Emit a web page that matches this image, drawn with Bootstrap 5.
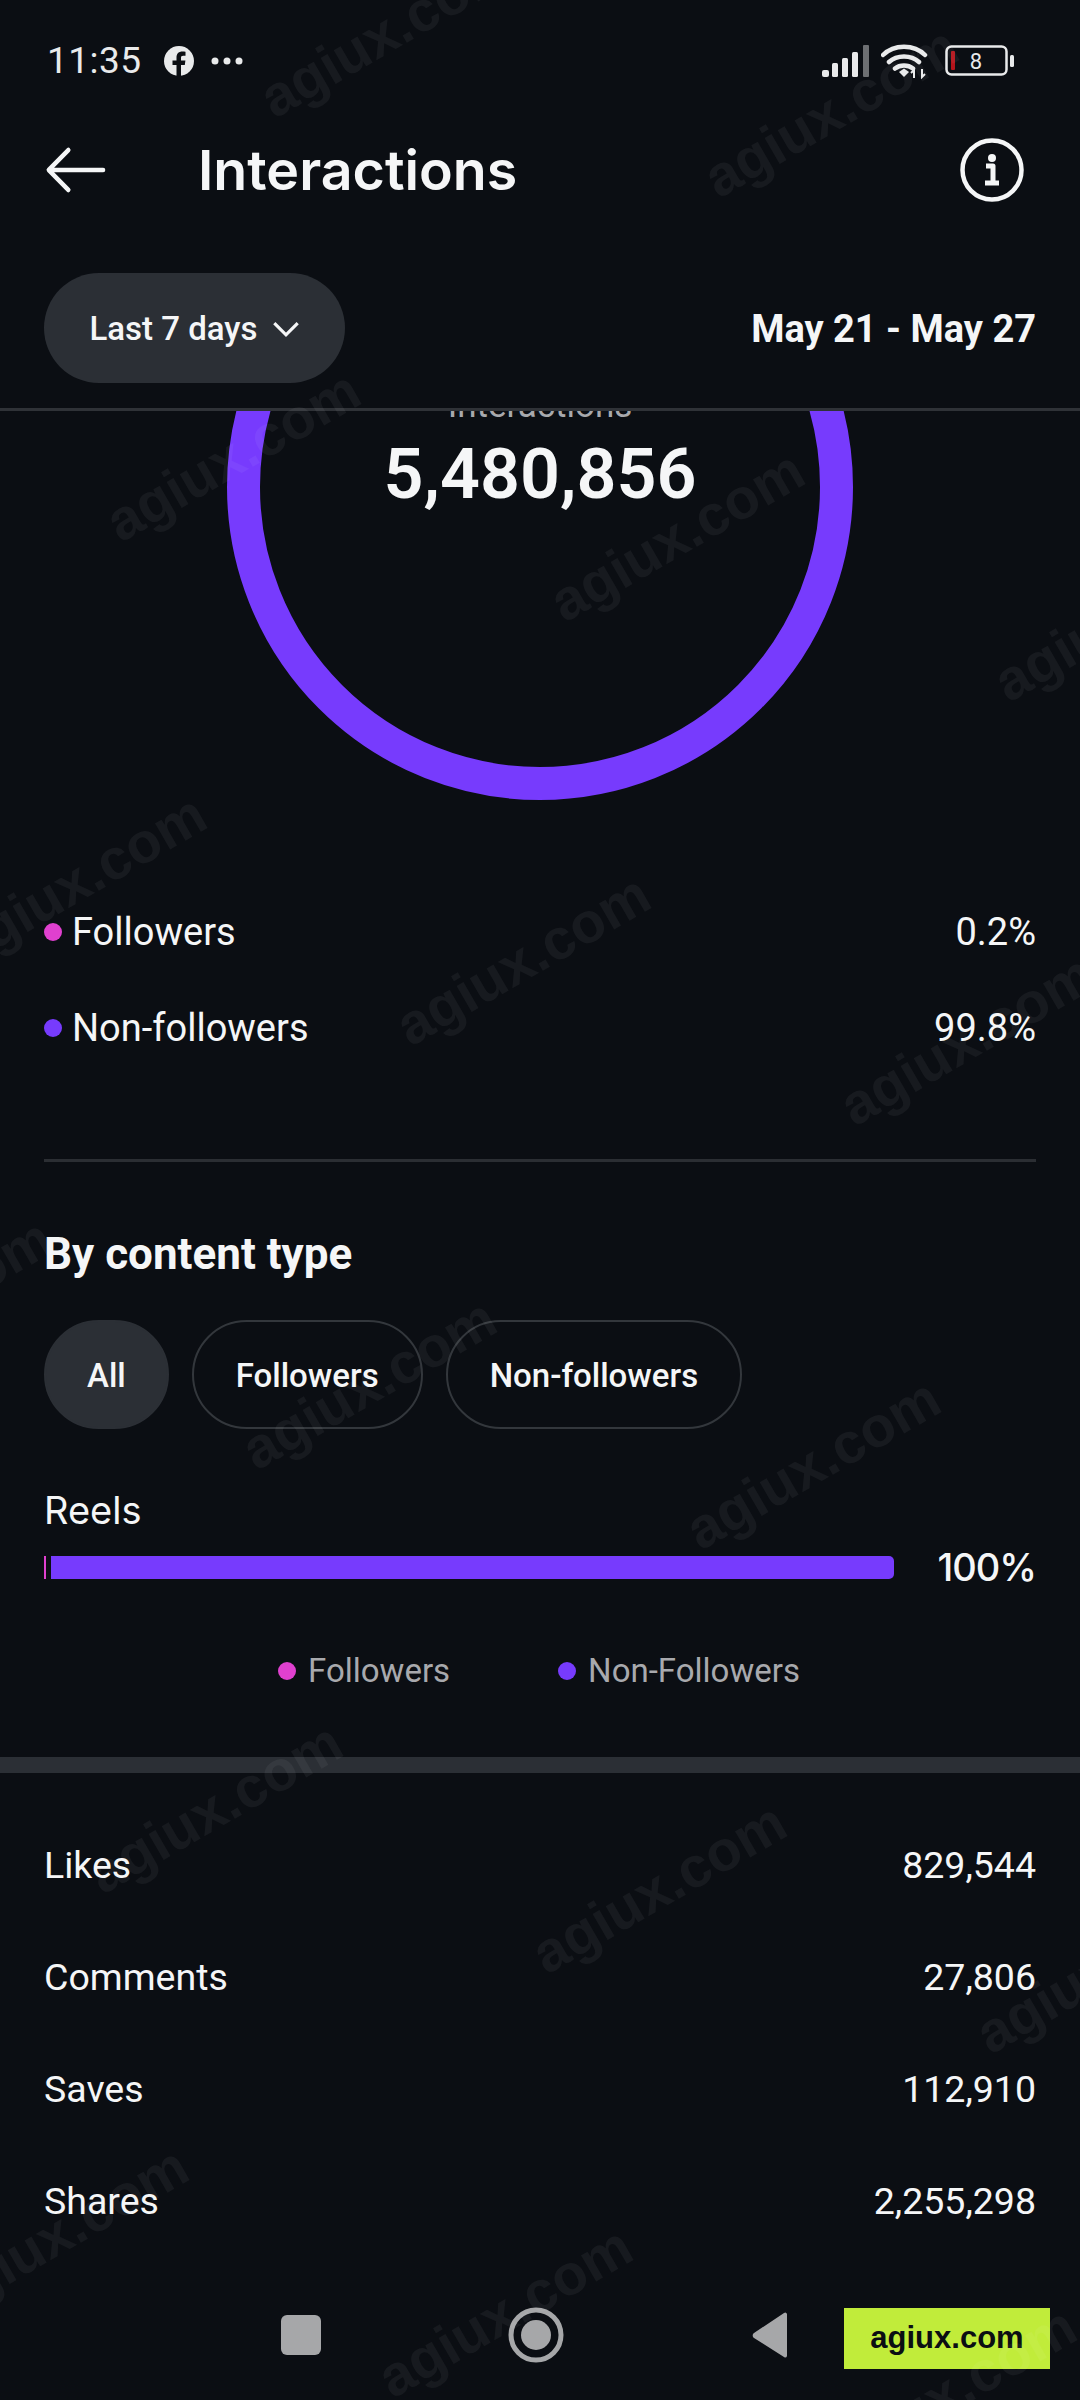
<!DOCTYPE html>
<html lang="en">
<head>
    <meta charset="UTF-8">
    <meta name="viewport" content="width=device-width, initial-scale=1.0">
    <title>Interactions</title>
    <link href="https://cdn.jsdelivr.net/npm/bootstrap@5.3.0/dist/css/bootstrap.min.css" rel="stylesheet">
    <style>
        body {
            width: 1080px;
            height: 2400px;
            overflow: hidden;
            background: #0b0e13;
            color: #f5f6f7;
            font-family: Roboto, "Liberation Sans", sans-serif;
            font-size: 38px;
        }
        .screen { width: 1080px; height: 2400px; overflow: hidden; }
        .side { padding-left: 44px; padding-right: 44px; }

        /* status bar */
        .status-bar { height: 122px; padding: 0 65px 0 47px; }
        .status-time { font-size: 37px; color: #e9eaeb; margin-right: 21px; letter-spacing: .5px; }
        .wifi-icon { margin-left: 11px; }
        .batt-icon { margin-left: 16px; }

        /* header */
        .app-head { height: 96px; padding: 0 44px; }
        .app-title { font-family: Inter, sans-serif; font-weight: 600; font-size: 55.500px; margin: 0 0 0 92px; }
        .back-arrow { width: 62px; }
        .info-btn { margin-right: 12px; }

        /* range */
        .range-bar { height: 193px; padding-top: 55px; border-bottom: 3px solid #2f3237; }
        .range-pill { height: 110px; width: 301px; background: #2b2f35; font-size: 33px; font-weight: 500; gap: 14px; color: #f5f6f7; padding-top: 2px !important; }
        .range-date { font-size: 38px; font-weight: 700; line-height: 112px; }

        /* donut */
        .donut-clip { height: 389px; overflow: hidden; }
        .donut-clip svg { margin-top: -237px; display: block; }
        .donut-label { top: -23px; left: 0; right: 0; text-align: center; font-size: 35px; color: #a8a9ad; line-height: 1; }
        .donut-value { top: 31px; left: 0; right: 0; text-align: center; font-size: 70px; font-weight: 600; line-height: 64px; }

        /* rows */
        .first-legend { margin-top: 84px; }
        .stat-row { height: 96px; }
        .metric-row { height: 112px; font-size: 37.500px; }
        .dot { width: 18px; height: 18px; border-radius: 50%; flex: none; }
        .dot-pink { background: #e040cf; }
        .dot-violet { background: #773bfd; }
        .stat-name { margin-left: 10px; }
        .rule { height: 3px; background: #2b2e33; margin: 83px 44px 0; }

        .type-title { font-size: 44px; font-weight: 700; height: 50px; line-height: 50px; margin: 67px 0 41px; }
        .chip-wrap { gap: 23px; }
        .chip { height: 109px; border: 2px solid #33373c; background: transparent; font-size: 33px; font-weight: 500; color: #f5f6f7; padding: 2px 42px 0; }
        .chip-on { background: #2b2f35; border-color: #2b2f35; padding: 2px 41px 0; }

        .reel-label { font-family: Inter, sans-serif; height: 50px; line-height: 50px; margin-top: 56px; font-size: 38px; }
        .reel-row { height: 50px; margin-top: 7px; }
        .reel-track { width: 850px; height: 23px; gap: 5px; }
        .reel-follow { width: 2px; background: #e040cf; }
        .reel-rest { background: #773bfd; border-radius: 0 5px 5px 0; }
        .reel-pct { font-family: Inter, sans-serif; font-weight: 500; font-size: 38px; letter-spacing: -1px; }

        .type-legend { height: 50px; margin-top: 54px; color: #a8a9ad; font-size: 33px; padding-left: 278px; }
        .legend-gap { margin-left: 108px; }

        .band { height: 16px; background: #2b2f35; margin-top: 61px; margin-bottom: 36px; }

        .brand-tag { right: 30px; top: 2308px; width: 206px; height: 61px; background: #c1ec3a; color: #0b0e13; font-family: "Liberation Sans", sans-serif; font-weight: 700; font-size: 31px; }

        .wm { position: absolute; font-family: "Liberation Sans", sans-serif; font-weight: 700; font-size: 57px; color: rgba(255, 255, 255, .05); transform: translate(-50%, -50%) rotate(-30deg); white-space: nowrap; }
    </style>
</head>
<body>
<div class="screen position-relative">

    <!-- status bar -->
    <div class="status-bar d-flex align-items-center">
        <span class="status-time">11:35</span>
        <svg width="32" height="32" viewBox="0 0 32 32" class="me-3">
            <circle cx="16" cy="16" r="15" fill="#e9eaeb"/>
            <path d="M13.5 31v-11h-4v-4.5h4v-3c0-4 2.400-6 5.800-6 1.500 0 2.700.2 3.200.3v4h-2.300c-1.800 0-2.200.9-2.200 2.200v2.500h4.400l-.6 4.500h-3.800v11z" fill="#0b0e13"/>
        </svg>
        <svg width="32" height="10" viewBox="0 0 32 10">
            <circle cx="4" cy="5" r="3.500" fill="#e9eaeb"/><circle cx="16" cy="5" r="3.500" fill="#e9eaeb"/><circle cx="28" cy="5" r="3.500" fill="#e9eaeb"/>
        </svg>
        <div class="ms-auto d-flex align-items-center">
            <svg width="48" height="32" viewBox="0 0 48 32">
                <rect x="0" y="25" width="7" height="7" rx="2" fill="#e9eaeb"/>
                <rect x="10" y="18" width="6" height="14" rx="1.500" fill="#e9eaeb"/>
                <rect x="20" y="13" width="6" height="19" rx="1.500" fill="#e9eaeb"/>
                <rect x="30" y="7" width="6" height="25" rx="1.500" fill="#e9eaeb"/>
                <rect x="41" y="0" width="6" height="32" rx="1" fill="#6d6f72"/>
            </svg>
            <svg width="48" height="36" viewBox="0 0 48 36" class="wifi-icon">
                <path d="M2 12C13 1 33 1 44 12M8 19c8-7.500 22-7.500 30 0M14 25.500c5-4 13-4 18 0" fill="none" stroke="#e9eaeb" stroke-width="4.500" stroke-linecap="round"/>
                <path d="M18 29l5-3.500 5 3.500-5 5z" fill="#e9eaeb"/>
                <path d="M33 35v-8l-3 3M41 26v8l3-3" fill="none" stroke="#e9eaeb" stroke-width="2"/>
            </svg>
            <svg width="70" height="32" viewBox="0 0 70 32" class="batt-icon">
                <rect x="1.500" y="1.500" width="60" height="28" rx="5" fill="none" stroke="#e9eaeb" stroke-width="2.500"/>
                <rect x="6" y="6" width="4" height="19" rx="1" fill="#b3141b"/>
                <rect x="65" y="10" width="4" height="12" rx="1.500" fill="#e9eaeb"/>
                <text x="31" y="24" text-anchor="middle" font-family="Roboto, sans-serif" font-size="22" fill="#e9eaeb">8</text>
            </svg>
        </div>
    </div>

    <!-- header -->
    <div class="app-head d-flex align-items-center">
        <svg class="back-arrow" height="48" viewBox="0 0 66 48" preserveAspectRatio="none">
            <path d="M63 24H6M26 4L5 24l21 20" fill="none" stroke="#f5f6f7" stroke-width="4.500" stroke-linecap="round" stroke-linejoin="round"/>
        </svg>
        <h1 class="app-title">Interactions</h1>
        <svg width="64" height="64" viewBox="0 0 64 64" class="info-btn ms-auto">
            <circle cx="32" cy="32" r="29.500" fill="none" stroke="#f5f6f7" stroke-width="4.500"/>
            <circle cx="32" cy="20" r="4" fill="#f5f6f7"/>
            <path d="M26 28h7v17M25 45h14" fill="none" stroke="#f5f6f7" stroke-width="5" stroke-linejoin="round"/>
        </svg>
    </div>

    <!-- date range -->
    <div class="range-bar side d-flex justify-content-between align-items-start">
        <button type="button" class="range-pill btn rounded-pill border-0 d-flex align-items-center justify-content-center p-0">
            Last 7 days
            <svg width="28" height="17" viewBox="0 0 26 16"><path d="M2 2l11 11L24 2" fill="none" stroke="#f5f6f7" stroke-width="3"/></svg>
        </button>
        <span class="range-date">May 21 - May 27</span>
    </div>

    <!-- donut -->
    <div class="donut-clip position-relative">
        <svg width="1080" height="640" viewBox="0 0 1080 640">
            <circle cx="540" cy="313" r="296.500" fill="none" stroke="#773bfd" stroke-width="33"/>
        </svg>
        <div class="donut-label position-absolute">Interactions</div>
        <div class="donut-value position-absolute">5,480,856</div>
    </div>

    <!-- audience -->
    <div class="side first-legend">
        <div class="stat-row d-flex align-items-center">
            <span class="dot dot-pink"></span><span class="stat-name flex-grow-1">Followers</span><span>0.2%</span>
        </div>
        <div class="stat-row d-flex align-items-center">
            <span class="dot dot-violet"></span><span class="stat-name flex-grow-1">Non-followers</span><span>99.8%</span>
        </div>
    </div>
    <div class="rule"></div>

    <!-- by content type -->
    <div class="side">
        <div class="type-title">By content type</div>
        <div class="chip-wrap d-flex">
            <button type="button" class="chip chip-on btn rounded-pill">All</button>
            <button type="button" class="chip btn rounded-pill">Followers</button>
            <button type="button" class="chip btn rounded-pill">Non-followers</button>
        </div>
        <div class="reel-label">Reels</div>
        <div class="reel-row d-flex align-items-center justify-content-between">
            <div class="reel-track d-flex">
                <div class="reel-follow"></div>
                <div class="reel-rest flex-grow-1"></div>
            </div>
            <span class="reel-pct">100%</span>
        </div>
    </div>
    <div class="type-legend d-flex align-items-center">
        <span class="dot dot-pink me-2"></span><span class="ms-1">Followers</span>
        <span class="dot dot-violet me-2 legend-gap"></span><span class="ms-1">Non-Followers</span>
    </div>

    <div class="band"></div>

    <!-- totals -->
    <div class="side">
        <div class="metric-row d-flex align-items-center justify-content-between"><span>Likes</span><span>829,544</span></div>
        <div class="metric-row d-flex align-items-center justify-content-between"><span>Comments</span><span>27,806</span></div>
        <div class="metric-row d-flex align-items-center justify-content-between"><span>Saves</span><span>112,910</span></div>
        <div class="metric-row d-flex align-items-center justify-content-between"><span>Shares</span><span>2,255,298</span></div>
    </div>

    <!-- android nav -->
    <svg class="position-absolute top-0 start-0" width="1080" height="2400" viewBox="0 0 1080 2400">
        <rect x="281" y="2315" width="40" height="40" rx="6" fill="#a6a7a9"/>
        <circle cx="536" cy="2335" r="25" fill="none" stroke="#a6a7a9" stroke-width="5"/>
        <circle cx="536" cy="2335" r="15" fill="#a6a7a9"/>
        <path d="M787 2314v42a2 2 0 0 1-3 1l-30-19a3 3 0 0 1 0-5l30-20a2 2 0 0 1 3 1z" fill="#a6a7a9"/>
    </svg>
    <div class="brand-tag position-absolute d-flex align-items-center justify-content-center">agiux.com</div>

    <div id="marks"></div>
</div>

<script>
    // watermark repeats on a skewed grid
    const holder = document.getElementById('marks');
    for (let j = -1; j <= 5; j++) {
        for (let i = -1; i <= 3; i++) {
            const x = 233 + i * 444 - j * 154;
            const y = 456 + i * 80 + j * 424;
            if (x < -100 || x > 1180 || y < 0 || y > 2440) continue;
            const el = document.createElement('span');
            el.className = 'wm';
            el.textContent = 'agiux.com';
            el.style.left = x + 'px';
            el.style.top = y + 'px';
            holder.appendChild(el);
        }
    }
</script>
<script src="https://cdn.jsdelivr.net/npm/bootstrap@5.3.0/dist/js/bootstrap.bundle.min.js"></script>
</body>
</html>
